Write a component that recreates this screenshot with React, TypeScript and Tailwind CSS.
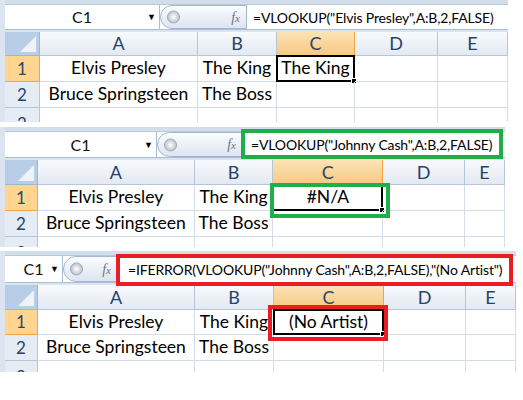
import React from "react";

type Col = { label: string; w: string };

interface SheetProps {
  cols: Col[];
  rowHead: string;
  nameBox: string;
  pill: string;
  formula: string;
  formulaPad: string;
  width: string;
  c1: string;
  rowHeights: string[];
  headH: string;
  barH: string;
  formulaBox?: string;
  cellBox?: string;
  activeCol: number;
}

const font = "font-['Lato','Open_Sans',sans-serif]";

function Sheet(p: SheetProps) {
  const data = [
    ["Elvis Presley", "The King", p.c1, "", ""],
    ["Bruce Springsteen", "The Boss", "", "", ""],
    ["", "", "", "", ""],
  ];
  return (
    <div className={`relative ${p.width} bg-[#dbe4ef] pl-[5px] overflow-hidden ${font}`}>
      {/* top strip */}
      <div className="h-[5px] bg-[#d3deeb] border-b border-[#b9c9dc]" />
      {/* formula bar */}
      <div className={`flex ${p.barH} bg-white border-b border-[#a9bdd4]`}>
        <div className={`${p.nameBox} relative flex items-center justify-center border-r border-[#a9bdd4] text-[16px] text-[#111]`}>
          <span>C1</span>
          <span className="absolute right-[3px] top-1/2 -translate-y-1/2 text-[9px] text-black">▼</span>
        </div>
        <div className={`${p.pill} relative flex items-center justify-end pr-[6px] rounded-l-full border border-[#a4b6cc] bg-linear-to-b from-[#fbfcfe] to-[#dde5f0]`}>
          <span className="absolute left-[6px] top-1/2 -translate-y-1/2 w-[13px] h-[13px] rounded-full bg-radial from-[#ffffff] to-[#a8b2bf] border border-[#9aa6b5]" />
          <span className="font-['Liberation_Serif',serif] italic text-[14px] text-[#6a7586]">f<span className="text-[11px]">x</span></span>
        </div>
        <div className={`flex-1 flex items-center ${p.formulaPad} whitespace-nowrap overflow-hidden text-[14px] tracking-[-0.15px] text-black`}>
          {p.formula}
        </div>
      </div>
      <div className="h-[2px] bg-[#dbe4ef]" />
      {/* grid */}
      <div className="flex flex-col bg-white">
        <div className={`flex ${p.headH}`}>
          <div className={`${p.rowHead} relative bg-[#b8cde6] border-r border-b border-[#9eb6ce]`}>
            <div className="absolute right-[3px] bottom-[3px] w-0 h-0 border-l-[16px] border-l-transparent border-b-[16px] border-b-[#eef3f9]" />
          </div>
          {p.cols.map((c, i) => (
            <div
              key={c.label + i}
              className={`${c.w} flex items-center justify-center text-[18px] border-r border-b ${
                i === p.activeCol
                  ? "bg-linear-to-b from-[#fce3b6] to-[#f6c980] border-[#f2a447] text-[#2f4566]"
                  : "bg-linear-to-b from-[#f8fafd] to-[#e3e9f2] border-[#b6c6d8] text-[#27436a]"
              }`}
            >
              {c.label}
            </div>
          ))}
        </div>
        {data.map((row, r) => (
          <div key={r} className={`flex ${p.rowHeights[r]}`}>
            <div
              className={`${p.rowHead} flex ${r < 2 ? "items-center" : "items-start pt-[3px]"} justify-center text-[17px] border-r border-b ${
                r === 0 ? "bg-[#ffd591] border-[#f2a447] text-[#2f4566]" : "bg-[#e6ecf4] border-[#b6c6d8] text-[#27436a]"
              }`}
            >
              {r + 1}
            </div>
            {p.cols.map((c, i) => (
              <div
                key={i}
                className={`${c.w} relative flex items-center justify-center whitespace-nowrap overflow-visible text-[17.5px] text-black border-r border-b border-[#d4dce8]`}
              >
                {r === 0 && i === p.activeCol && (
                  <div className="absolute -left-[1px] -top-[1px] right-[-1px] bottom-[-1px] border-[2px] border-black">
                    <div className="absolute -right-[4px] -bottom-[4px] w-[6px] h-[6px] bg-black border border-white" />
                  </div>
                )}
                <span className="relative">{row[i]}</span>
              </div>
            ))}
          </div>
        ))}
      </div>
      {p.formulaBox && <div className={`absolute ${p.formulaBox}`} />}
      {p.cellBox && <div className={`absolute ${p.cellBox}`} />}
    </div>
  );
}

export default function App() {
  return (
    <div className="w-[523px] h-[400px] bg-white flex flex-col overflow-hidden">
      <Sheet
        width="w-[508px] h-[122px]"
        cols={[
          { label: "A", w: "w-[158px]" },
          { label: "B", w: "w-[79px]" },
          { label: "C", w: "w-[78px]" },
          { label: "D", w: "w-[83px]" },
          { label: "E", w: "w-[70px]" },
        ]}
        rowHead="w-[35px]"
        nameBox="w-[155px]"
        pill="w-[87px]"
        formula={'=VLOOKUP("Elvis Presley",A:B,2,FALSE)'}
        formulaPad="pl-[6px]"
        c1="The King"
        rowHeights={["h-[26px]", "h-[26px]", "h-[26px]"]}
        headH="h-[24px]"
        barH="h-[25px]"
        activeCol={2}
      />
      <div className="h-[5px] shrink-0" />
      <Sheet
        width="w-[505px] h-[120px]"
        cols={[
          { label: "A", w: "w-[157px]" },
          { label: "B", w: "w-[79px]" },
          { label: "C", w: "w-[110px]" },
          { label: "D", w: "w-[82px]" },
          { label: "E", w: "w-[40px]" },
        ]}
        rowHead="w-[33px]"
        nameBox="w-[152px]"
        pill="w-[86px]"
        formula={'=VLOOKUP("Johnny Cash",A:B,2,FALSE)'}
        formulaPad="pl-[8px]"
        c1="#N/A"
        rowHeights={["h-[26px]", "h-[26px]", "h-[26px]"]}
        headH="h-[25px]"
        barH="h-[26px]"
        formulaBox="left-[241px] top-[2px] w-[262px] h-[30px] border-[4px] border-[#21ad48]"
        cellBox="left-[270px] top-[56px] w-[120px] h-[35px] border-[4px] border-[#21ad48]"
        activeCol={2}
      />
      <div className="h-[4px] shrink-0" />
      <Sheet
        width="w-[516px] h-[121px]"
        cols={[
          { label: "A", w: "w-[157px]" },
          { label: "B", w: "w-[79px]" },
          { label: "C", w: "w-[110px]" },
          { label: "D", w: "w-[82px]" },
          { label: "E", w: "w-[50px]" },
        ]}
        rowHead="w-[33px]"
        nameBox="w-[58px]"
        pill="w-[55px]"
        formula={'=IFERROR(VLOOKUP("Johnny Cash",A:B,2,FALSE),"(No Artist")'}
        formulaPad="pl-[10px]"
        c1="(No Artist)"
        rowHeights={["h-[25px]", "h-[26px]", "h-[26px]"]}
        headH="h-[25px]"
        barH="h-[27px]"
        formulaBox="left-[116px] top-[3px] w-[397px] h-[32px] border-[4px] border-[#ec1c24]"
        cellBox="left-[268px] top-[54px] w-[120px] h-[36px] border-[4px] border-[#ec1c24]"
        activeCol={2}
      />
    </div>
  );
}
